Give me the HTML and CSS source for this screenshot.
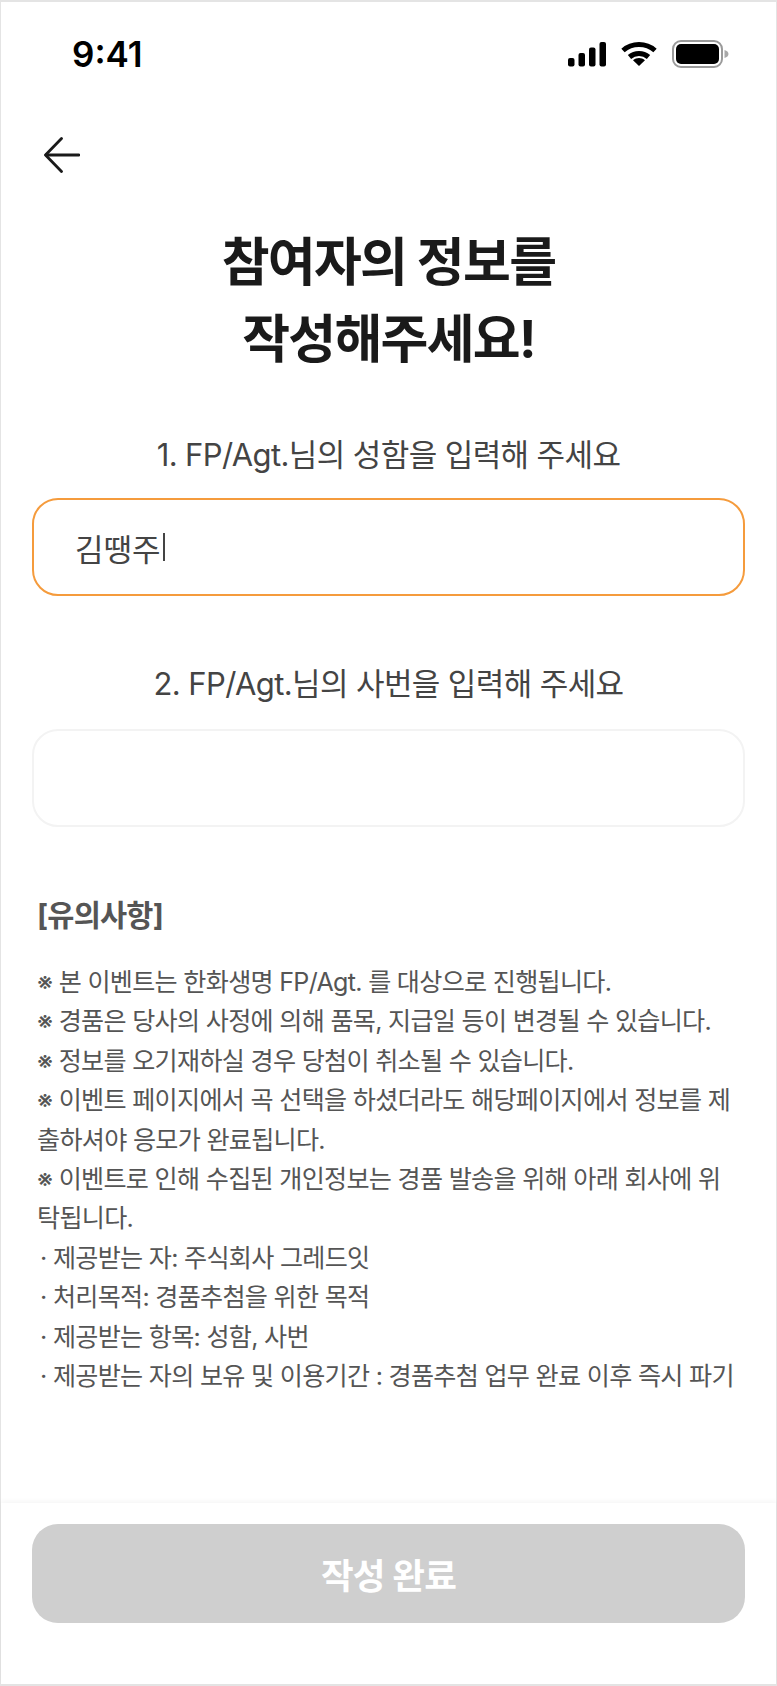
FILE: index.html
```html
<!DOCTYPE html>
<html lang="ko">
<head>
    <meta charset="UTF-8">
    <meta name="viewport" content="width=device-width, initial-scale=1.0">
    <title>참여자 정보 작성</title>
    <link rel="stylesheet" href="styles.css">
</head>
<body>
    <div class="screen">
        <div class="status-bar">
            <span class="time">9:41</span>
            <div class="status-icons">
                <svg class="icon-signal" width="38" height="25" viewBox="0 0 38 25" fill="#000">
                    <rect x="0" y="16" width="6.5" height="8.5" rx="2"/>
                    <rect x="10.5" y="11" width="6.5" height="13.5" rx="2"/>
                    <rect x="21" y="5.5" width="6.5" height="19" rx="2"/>
                    <rect x="31.5" y="0" width="6.5" height="24.5" rx="2"/>
                </svg>
                <svg class="icon-wifi" width="36" height="26" viewBox="0 0 36 26" fill="none" stroke="#000" stroke-width="5">
                    <path d="M2 9.5 C11 1.5 25 1.5 34 9.5"/>
                    <path d="M8.5 16 C14 11.2 22 11.2 27.5 16"/>
                    <path d="M12 19.2 L18 25 L24 19.2 C20.5 16.2 15.5 16.2 12 19.2 Z" fill="#000" stroke="none"/>
                </svg>
                <svg class="icon-battery" width="57" height="28" viewBox="0 0 57 28">
                    <rect x="1" y="1" width="49" height="26" rx="8" fill="#fff" stroke="#9a9a9a" stroke-width="2"/>
                    <rect x="4" y="4" width="43" height="20" rx="5" fill="#000"/>
                    <path d="M52.5 10 C55 10.8 56.5 12 56.5 14 C56.5 16 55 17.2 52.5 18 Z" fill="#a8a8a8"/>
                </svg>
            </div>
        </div>

        <button class="back-btn" type="button" aria-label="뒤로">
            <svg width="36" height="36" viewBox="0 0 36 36" fill="none" stroke="#1a1a1a" stroke-width="2.8" stroke-linecap="round" stroke-linejoin="round">
                <path d="M35 18 H2"/>
                <path d="M17.5 1.5 L1.5 18 L17.5 34.5"/>
            </svg>
        </button>

        <main class="content">
            <h1 class="title">참여자의 정보를<br>작성해주세요!</h1>

            <p class="field-label">1. FP/Agt.님의 성함을 입력해 주세요</p>
            <div class="field field-active"><span class="field-value">김땡주</span><span class="caret"></span></div>

            <p class="field-label second">2. FP/Agt.님의 사번을 입력해 주세요</p>
            <div class="field"></div>

            <section class="notice">
                <h2 class="notice-title">[유의사항]</h2>
                <p>※ 본 이벤트는 한화생명 FP/Agt. 를 대상으로 진행됩니다.</p>
                <p>※ 경품은 당사의 사정에 의해 품목, 지급일 등이 변경될 수 있습니다.</p>
                <p>※ 정보를 오기재하실 경우 당첨이 취소될 수 있습니다.</p>
                <p>※ 이벤트 페이지에서 곡 선택을 하셨더라도 해당페이지에서 정보를 제출하셔야 응모가 완료됩니다.</p>
                <p>※ 이벤트로 인해 수집된 개인정보는 경품 발송을 위해 아래 회사에 위탁됩니다.</p>
                <p class="sub">· 제공받는 자: 주식회사 그레드잇</p>
                <p class="sub">· 처리목적: 경품추첨을 위한 목적</p>
                <p class="sub">· 제공받는 항목: 성함, 사번</p>
                <p class="sub">· 제공받는 자의 보유 및 이용기간 : 경품추첨 업무 완료 이후 즉시 파기</p>
            </section>
        </main>

        <footer class="footer">
            <button class="submit-btn" type="button">작성 완료</button>
        </footer>
    </div>
</body>
</html>
```

FILE: styles.css
```css
* {
    margin: 0;
    padding: 0;
    box-sizing: border-box;
}

body {
    font-family: Inter, 'Noto Sans CJK KR', sans-serif;
    background: #fff;
}

.screen {
    width: 777px;
    height: 1686px;
    display: flex;
    flex-direction: column;
    background: #fff;
    border: 1px solid #e4e4e4;
    border-top-width: 2px;
    border-bottom-width: 2px;
}

/* Status bar */
.status-bar {
    display: flex;
    justify-content: space-between;
    align-items: center;
    height: 28px;
    margin-top: 38px;
    padding: 0 47px 0 71px;
}

.time {
    font-size: 35px;
    font-weight: 600;
    color: #000;
}

.status-icons {
    display: flex;
    align-items: center;
    gap: 15px;
}

/* Back arrow */
.back-btn {
    align-self: flex-start;
    display: flex;
    margin: 69px 0 0 43px;
    background: none;
    border: none;
}

/* Form */
.content {
    flex: 1;
    padding: 0 31px;
}

.title {
    margin-top: 51px;
    font-size: 52px;
    font-weight: 700;
    line-height: 77px;
    letter-spacing: -1.7px;
    text-align: center;
    color: #1a1a1a;
}

.field-label {
    margin-top: 57px;
    font-size: 31px;
    line-height: 40px;
    letter-spacing: -0.6px;
    text-align: center;
    color: #444;
}

.field-label.second {
    margin-top: 68px;
}

.field {
    display: flex;
    align-items: center;
    height: 98px;
    margin-top: 23px;
    padding: 0 41px;
    border: 2px solid #f3f3f3;
    border-radius: 26px;
}

.second + .field {
    margin-top: 25px;
}

.field-active {
    border-color: #f59b3c;
}

.field-value {
    font-size: 31px;
    color: #444;
}

.caret {
    width: 2px;
    height: 28px;
    margin-left: 2px;
    background: #444;
}

/* Notice */
.notice {
    margin-top: 68px;
    padding: 0 9px 0 5px;
    color: #555;
    font-size: 25.1px;
    line-height: 39.4px;
    letter-spacing: -0.7px;
    word-break: break-all;
}

.notice-title {
    margin-bottom: 28px;
    font-size: 29.5px;
    font-weight: 700;
    line-height: 40px;
    letter-spacing: -0.8px;
}

.sub {
    padding-left: 3px;
}

/* Bottom button */
.footer {
    padding: 21px 31px 61px;
    box-shadow: 0 -2px 5px rgba(0, 0, 0, 0.04);
}

.submit-btn {
    display: block;
    width: 100%;
    height: 99px;
    font-family: inherit;
    font-size: 35.5px;
    font-weight: 700;
    letter-spacing: -0.8px;
    color: #fff;
    background: #cfcfcf;
    border: none;
    border-radius: 26px;
}
```
